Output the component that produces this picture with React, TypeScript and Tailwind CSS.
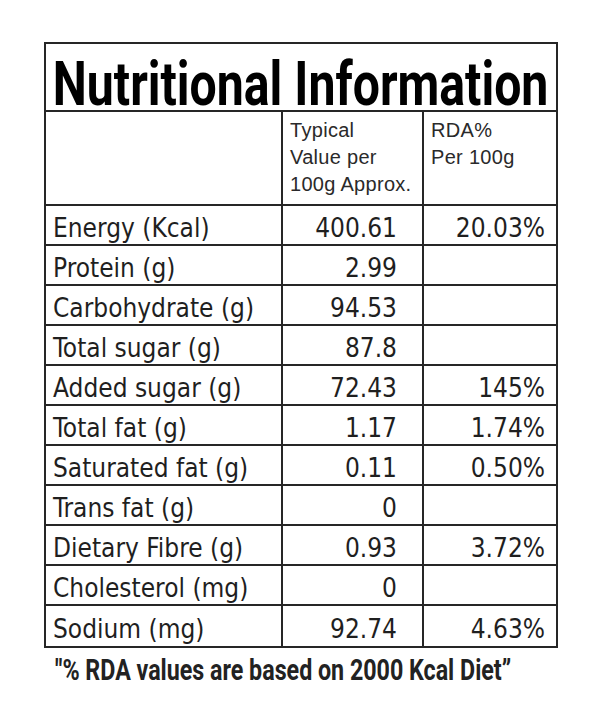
const rows: [string, string, string][] = [
  ["Energy (Kcal)", "400.61", "20.03%"],
  ["Protein (g)", "2.99", ""],
  ["Carbohydrate (g)", "94.53", ""],
  ["Total sugar (g)", "87.8", ""],
  ["Added sugar (g)", "72.43", "145%"],
  ["Total fat (g)", "1.17", "1.74%"],
  ["Saturated fat (g)", "0.11", "0.50%"],
  ["Trans fat (g)", "0", ""],
  ["Dietary Fibre (g)", "0.93", "3.72%"],
  ["Cholesterol (mg)", "0", ""],
  ["Sodium (mg)", "92.74", "4.63%"],
];

const narrow = "font-['DejaVu_Sans_Condensed','DejaVu_Sans',sans-serif] font-stretch-condensed";

export default function App() {
  return (
    <div className="h-[724px] w-[600px] overflow-hidden bg-white pt-[42px] pl-[44px] text-[#1f1f1f]">
      <div className="w-[514px] border-2 border-[#262626]">
        <div className="h-[68px] border-b-2 border-[#262626] pt-[10px] flex items-start justify-center whitespace-nowrap font-['Roboto',sans-serif] text-[61px] font-bold leading-none text-black">
          <span className="shrink-0 scale-x-[0.79]">Nutritional Information</span>
        </div>
        <div className="grid grid-cols-[237px_141px_132px] h-[94px] border-b-2 border-[#262626] font-['Liberation_Sans',Arial,sans-serif] text-[20px] leading-[27px] tracking-[0.3px] text-[#2a2a2a]">
          <div className="border-r-2 border-[#262626]" />
          <div className="border-r-2 border-[#262626] pl-[7px] pt-[5px] whitespace-nowrap">
            Typical<br />Value per<br />100g Approx.
          </div>
          <div className="pl-[7px] pt-[5px]">
            RDA%<br />Per 100g
          </div>
        </div>
        {rows.map(([name, value, rda], i) => (
          <div
            key={name}
            className={`grid grid-cols-[237px_141px_132px] h-[40px] text-[26px] leading-none items-stretch ${narrow} ${i < rows.length - 1 ? "border-b-2 border-[#262626]" : ""}`}
          >
            <div className="border-r-2 border-[#262626] flex items-center pl-[7px] pt-[6px]">{name}</div>
            <div className="border-r-2 border-[#262626] flex items-center justify-end pr-[25px] pt-[6px]">{value}</div>
            <div className="flex items-center justify-end pr-[11px] pt-[6px]">{rda}</div>
          </div>
        ))}
      </div>
      <div className="mt-[7px] pl-[11px] whitespace-nowrap font-['Roboto',sans-serif] text-[30px] font-bold leading-none text-[#222]">
        <span className="inline-block origin-left scale-x-[0.775]">
          "% RDA values are based on 2000 Kcal Diet”
        </span>
      </div>
    </div>
  );
}
